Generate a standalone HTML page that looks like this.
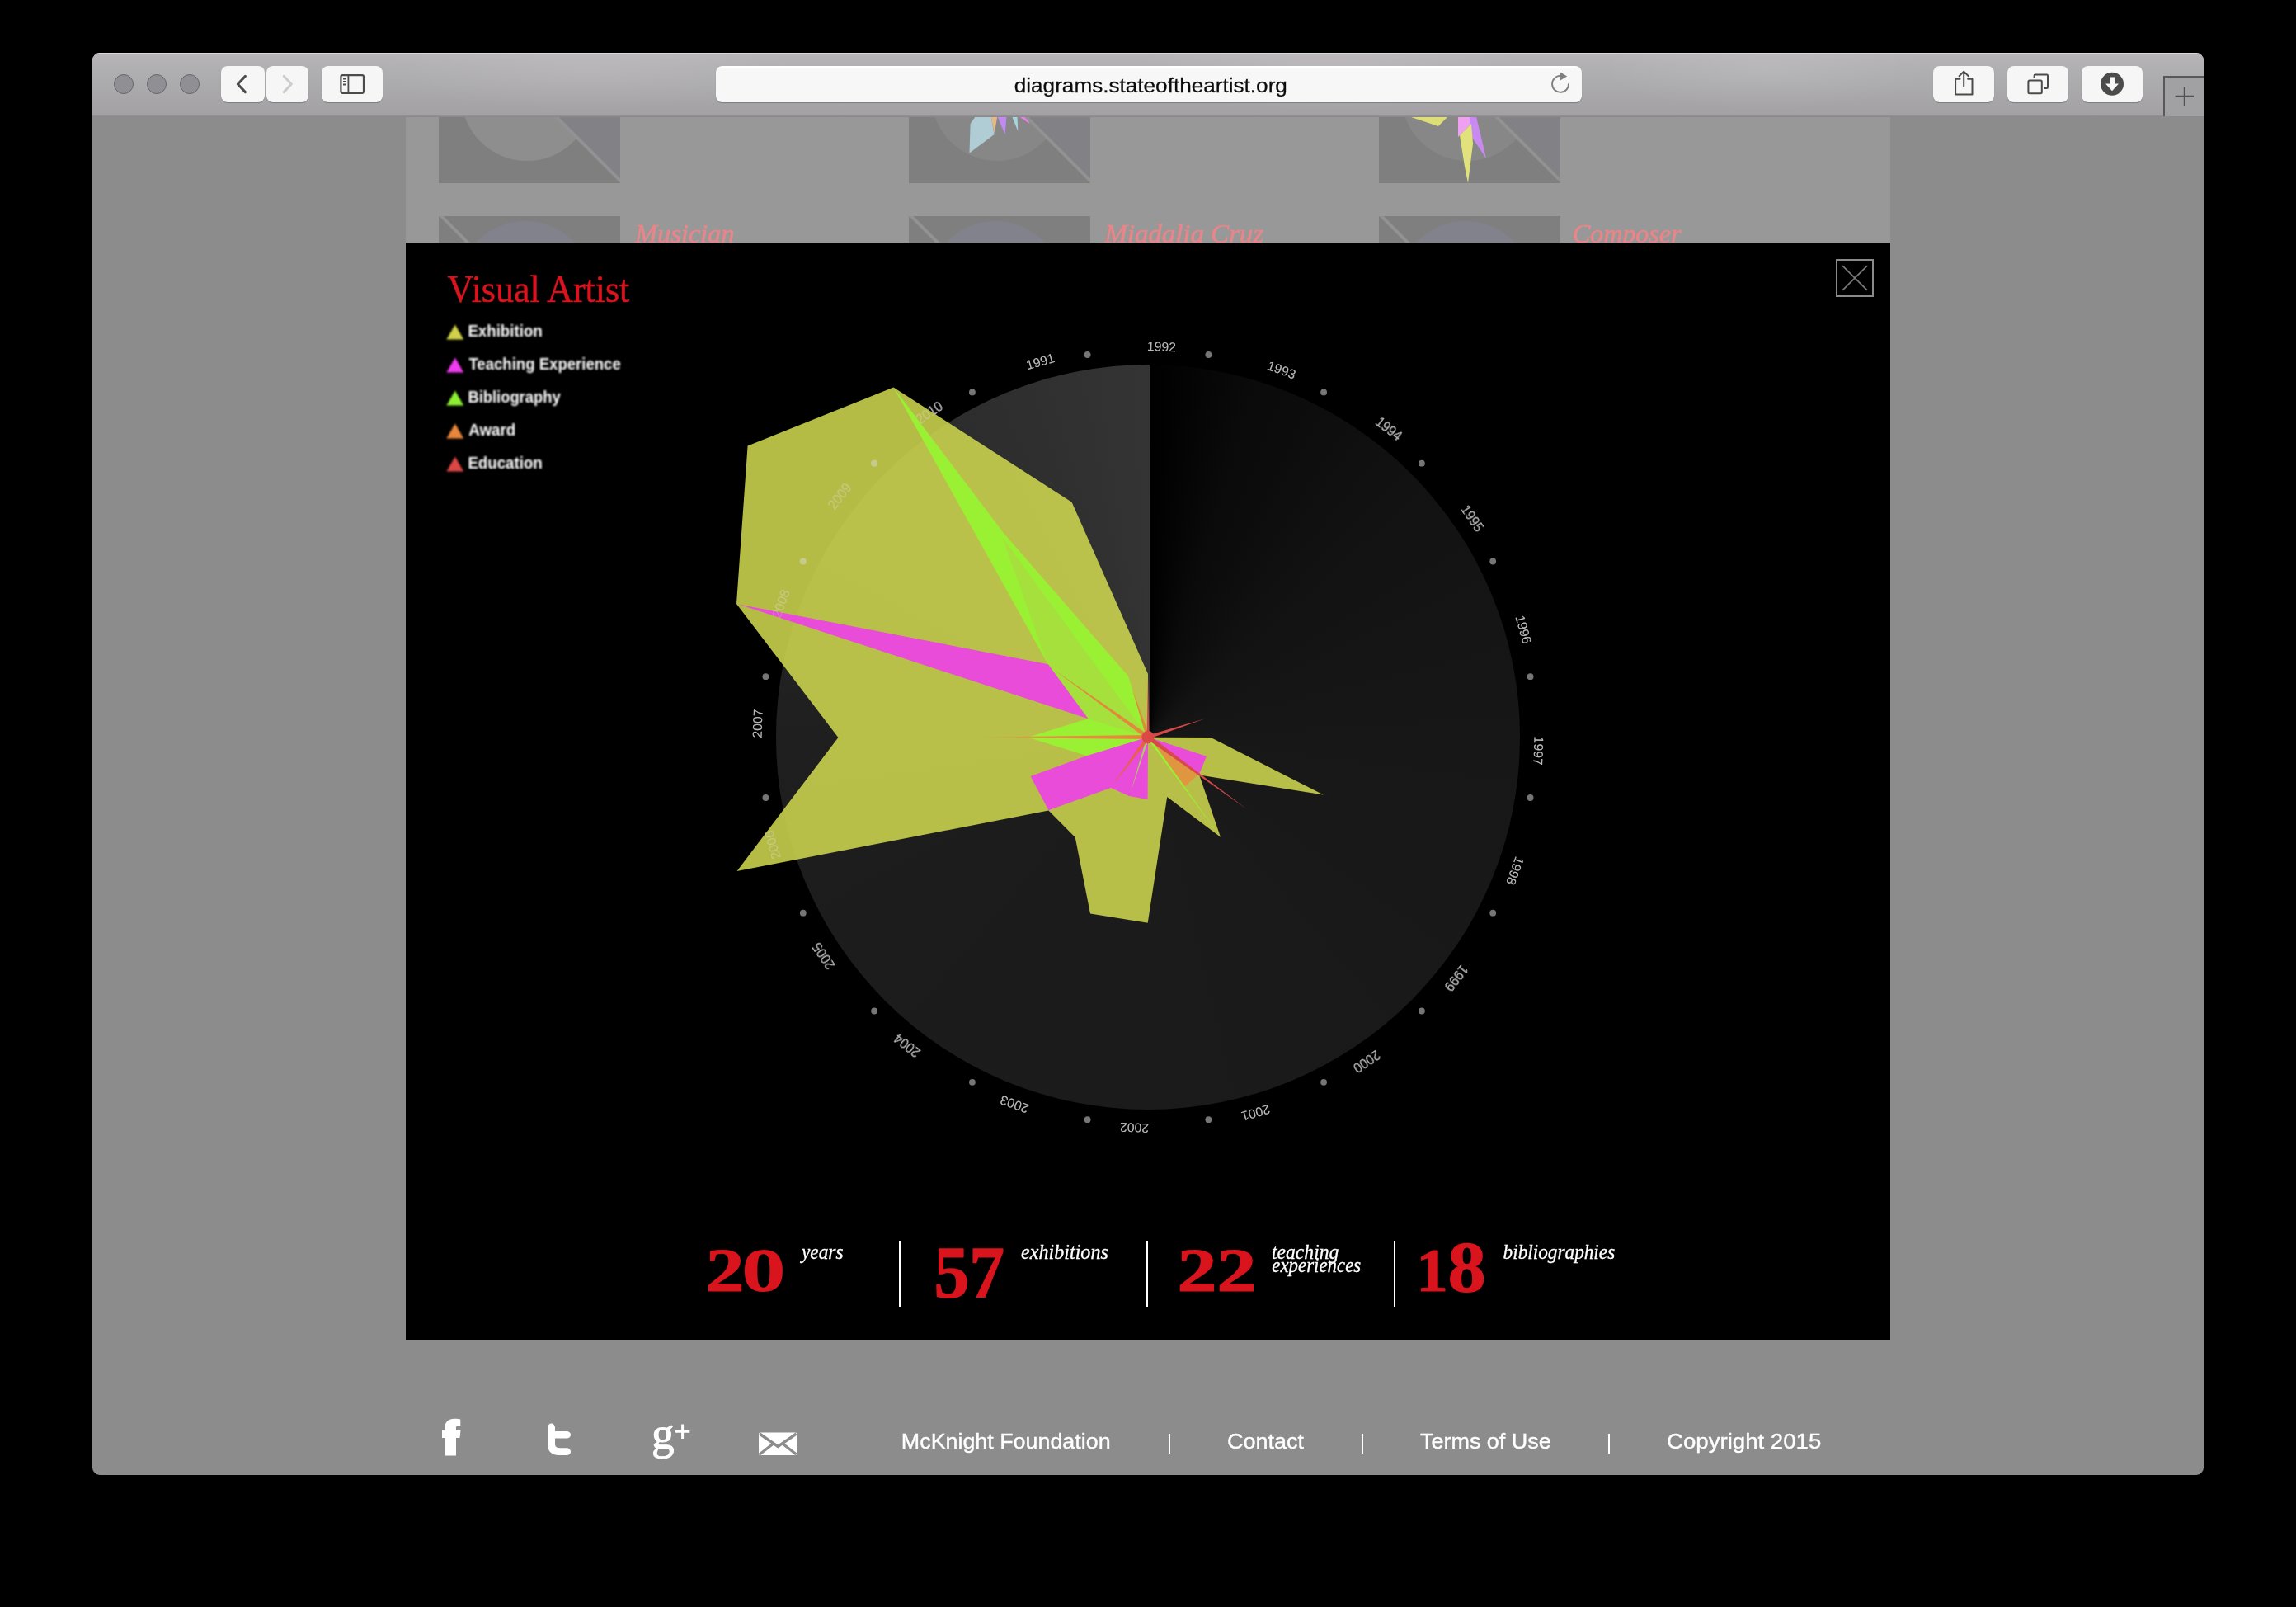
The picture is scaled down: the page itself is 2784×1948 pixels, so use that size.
<!DOCTYPE html>
<html><head><meta charset="utf-8"><title>diagrams.stateoftheartist.org</title>
<style>
*{margin:0;padding:0;box-sizing:border-box}
html,body{width:2784px;height:1948px;background:#000;overflow:hidden}
body{position:relative;font-family:"Liberation Sans",sans-serif}
.abs{position:absolute}
.win{position:absolute;left:112px;top:64px;width:2560px;height:1724px;background:#8c8c8c;border-radius:9px;overflow:hidden}
.tb{position:absolute;left:0;top:0;width:2560px;height:78px;background:radial-gradient(ellipse 260px 50px at 600px 20px,rgba(255,245,250,.10),transparent),radial-gradient(ellipse 240px 50px at 1500px 20px,rgba(255,235,240,.12),transparent),radial-gradient(ellipse 200px 50px at 2030px 20px,rgba(255,250,250,.10),transparent),linear-gradient(#b9b6b9 0,#b3b1b4 14%,#afaeb1 27%,#acabae 44%,#a3a1a4 96.5%,#8b898c 98.6%,#8b898c 100%);}
.tb:before{content:"";position:absolute;left:0;top:0;right:0;height:1.5px;background:#dededf;opacity:.9}
.tl{position:absolute;top:26px;width:24px;height:24px;border-radius:50%;background:#908f94;border:1px solid #68666b}
.btn{position:absolute;top:16px;height:44px;background:#f6f6f6;border-radius:8px;box-shadow:0 1px 1px rgba(0,0,0,.25)}
.url{position:absolute;left:756px;top:16px;width:1050px;height:44px;background:linear-gradient(#fff 0,#fff 4%,#f7f7f7 9%,#f7f7f7 100%);border-radius:8px;box-shadow:0 1px 1px rgba(0,0,0,.25)}
.url span{position:absolute;left:362px;top:7px;font-size:24.5px;line-height:30px;color:#0a0a0a;white-space:nowrap;letter-spacing:0px}
.newtab{position:absolute;left:2511px;top:28px;width:60px;height:49px;border:2px solid #58575a;border-right:none;border-bottom:none;background:#a1a0a3}
.col{position:absolute;left:380px;top:78px;width:1800px;height:152px;background:#989898;overflow:hidden}
.th{position:absolute;width:220px;height:220px;background:#7f7f7f;overflow:hidden}
.th i{position:absolute;border-radius:50%}
.th b{position:absolute;left:-50px;top:105px;width:320px;height:4px;background:#929292;transform:rotate(45deg)}
.th u{position:absolute;left:0;top:0;width:220px;height:220px;background:#818186;clip-path:polygon(3px 0,220px 0,220px 217px)}
.nm{position:absolute;top:192px;font-family:"Liberation Serif",serif;font-style:italic;font-size:32px;line-height:40px;color:#e8858a;white-space:nowrap}
.modal{position:absolute;left:492px;top:294px;width:1800px;height:1330px;background:#000}
.title{position:absolute;left:541px;top:322px;font-family:"Liberation Serif",serif;font-size:46px;line-height:56px;color:#d9141e;white-space:nowrap}
.lg{position:absolute;left:568px;font-size:19px;line-height:24px;font-weight:bold;color:#f4f4f4;white-space:nowrap;filter:blur(.5px)}
.tri{position:absolute;left:541px;width:0;height:0;border-left:10.5px solid transparent;border-right:10.5px solid transparent;border-bottom:18px solid #000;filter:blur(.5px)}
.disc{position:absolute;left:940.7px;top:442.3px;width:902.6px;height:902.6px;border-radius:50%;background:conic-gradient(from 0deg at calc(50% + 1.6px) 50%,#000 0deg,#0a0a0a 16deg,#121212 45deg,#171717 90deg,#191919 135deg,#1b1b1b 180deg,#1c1c1c 240deg,#1f1f1f 270deg,#262626 300deg,#2d2d2d 330deg,#343434 360deg)}
.num{position:absolute;font-family:"Liberation Serif",serif;font-weight:bold;color:#d9141c;white-space:nowrap;line-height:1;transform-origin:0 0}
.lab{position:absolute;font-family:"Liberation Serif",serif;font-style:italic;font-size:24px;line-height:16px;color:#fff;white-space:nowrap}
.sep{position:absolute;top:1504px;width:2px;height:80px;background:#fff}
.ft{position:absolute;top:1731px;font-size:25px;line-height:30px;color:#fff;white-space:nowrap}

</style></head>
<body>
<div class="win">
  <div class="col">
    <div class="th" style="left:40px;top:-140px"><i style="left:27px;top:33px;width:160px;height:160px;background:#8e8e8e"></i><u></u><b></b></div>
    <div class="th" style="left:610px;top:-140px"><i style="left:27px;top:33px;width:160px;height:160px;background:#878787"></i>
      <svg class="abs" style="left:0;top:0" width="220" height="220" viewBox="0 0 220 220"><polygon points="81,139 74.6,148 73.5,183.6 103.5,161 99.7,139" fill="#b0cdd6"/><polygon points="99.7,139 107.4,139 103.6,159.500" fill="#e6b88a"/><polygon points="107.2,139 118.5,139 116.6,161" fill="#c08af0"/><polygon points="125,139 131.5,139 132.3,157" fill="#a8d4e0"/><polygon points="133.4,139 142.8,139 146.5,148" fill="#e880f0"/></svg><u></u><b></b></div>
    <div class="th" style="left:1180px;top:-140px"><i style="left:27px;top:33px;width:160px;height:160px;background:#878787"></i>
      <svg class="abs" style="left:0;top:0" width="220" height="220" viewBox="0 0 220 220"><polygon points="36,139 84,139 72,151" fill="#dede78"/><polygon points="96,139 110,139 110,150 96,164" fill="#f0a0f0"/><polygon points="110,139 118,139 130,190 110,160" fill="#c88af0"/><polygon points="98,162 112,148 114,172 108,220 104,200" fill="#e2e27c"/></svg><u></u><b></b></div>
    <div class="th" style="left:40px;top:120px"><i style="left:23px;top:6px;width:164px;height:164px;background:#82828d"></i><b style="top:-5px;left:-160px"></b></div>
    <div class="th" style="left:610px;top:120px"><i style="left:23px;top:6px;width:164px;height:164px;background:#82828d"></i><b style="top:-5px;left:-160px"></b></div>
    <div class="th" style="left:1180px;top:120px"><i style="left:23px;top:6px;width:164px;height:164px;background:#82828d"></i><b style="top:-5px;left:-160px"></b></div>
    <svg class="abs" style="left:0;top:0" width="1800" height="152" viewBox="492 142 1800 152">
<text transform="matrix(0.9926 0 0 1 769.52 294.20)" font-family="Liberation Serif, serif" font-size="32.6" font-weight="normal" font-style="italic" fill="#e88589" stroke="#e88589" stroke-width=".5">Musician</text>
<text transform="matrix(1.0082 0 0 1 1338.93 294.20)" font-family="Liberation Serif, serif" font-size="32.6" font-weight="normal" font-style="italic" fill="#e88589" stroke="#e88589" stroke-width=".5">Miadalia Cruz</text>
<text transform="matrix(0.9834 0 0 1 1906.24 294.20)" font-family="Liberation Serif, serif" font-size="32.6" font-weight="normal" font-style="italic" fill="#e88589" stroke="#e88589" stroke-width=".5">Composer</text>
</svg>
  </div>
  <div class="tb">
    <div class="tl" style="left:26px"></div><div class="tl" style="left:66px"></div><div class="tl" style="left:106px"></div>
    <div class="btn" style="left:156px;width:53px"></div>
    <div class="btn" style="left:211px;width:51px"></div>
    <div class="btn" style="left:278px;width:74px"></div>
    <div class="url"></div>
    <div class="btn" style="left:2232px;width:74px"></div>
    <div class="btn" style="left:2322px;width:74px"></div>
    <div class="btn" style="left:2412px;width:74px"></div>
    <div class="newtab"></div>
  </div>
</div>
<div class="modal"></div>
<div class="disc"></div>
<svg class="abs" style="left:0;top:0" width="2784" height="1948" viewBox="0 0 2784 1948">
<defs><linearGradient id="lg" gradientUnits="userSpaceOnUse" x1="1392" y1="0" x2="1170" y2="0"><stop offset="0" stop-color="#e8843c"/><stop offset=".6" stop-color="#e0903c" stop-opacity=".9"/><stop offset="1" stop-color="#d8a040" stop-opacity="0"/></linearGradient></defs>
<circle cx="1465.4" cy="430.0" r="3.9" fill="#767676"/>
<circle cx="1605.1" cy="475.4" r="3.9" fill="#767676"/>
<circle cx="1723.9" cy="561.7" r="3.9" fill="#767676"/>
<circle cx="1810.2" cy="680.5" r="3.9" fill="#767676"/>
<circle cx="1855.6" cy="820.2" r="3.9" fill="#767676"/>
<circle cx="1855.6" cy="967.0" r="3.9" fill="#767676"/>
<circle cx="1810.2" cy="1106.7" r="3.9" fill="#767676"/>
<circle cx="1723.9" cy="1225.5" r="3.9" fill="#767676"/>
<circle cx="1605.1" cy="1311.8" r="3.9" fill="#767676"/>
<circle cx="1465.4" cy="1357.2" r="3.9" fill="#767676"/>
<circle cx="1318.6" cy="1357.2" r="3.9" fill="#767676"/>
<circle cx="1178.9" cy="1311.8" r="3.9" fill="#767676"/>
<circle cx="1060.1" cy="1225.5" r="3.9" fill="#767676"/>
<circle cx="973.8" cy="1106.7" r="3.9" fill="#767676"/>
<circle cx="928.4" cy="967.0" r="3.9" fill="#767676"/>
<circle cx="928.4" cy="820.2" r="3.9" fill="#767676"/>
<circle cx="973.8" cy="680.5" r="3.9" fill="#767676"/>
<circle cx="1060.1" cy="561.7" r="3.9" fill="#767676"/>
<circle cx="1178.9" cy="475.4" r="3.9" fill="#767676"/>
<circle cx="1318.6" cy="430.0" r="3.9" fill="#767676"/>
<g font-family="Liberation Sans, sans-serif" font-size="15.8" fill="#b6b6b6" fill-opacity="1" text-anchor="middle" style="filter:blur(.65px)">
<text transform="rotate(2.0 1392.0 893.6)" x="1392.0" y="425.4">1992</text>
<text transform="rotate(20.0 1392.0 893.6)" x="1392.0" y="425.4">1993</text>
<text transform="rotate(38.0 1392.0 893.6)" x="1392.0" y="425.4">1994</text>
<text transform="rotate(56.0 1392.0 893.6)" x="1392.0" y="425.4">1995</text>
<text transform="rotate(74.0 1392.0 893.6)" x="1392.0" y="425.4">1996</text>
<text transform="rotate(92.0 1392.0 893.6)" x="1392.0" y="425.4">1997</text>
<text transform="rotate(110.0 1392.0 893.6)" x="1392.0" y="425.4">1998</text>
<text transform="rotate(128.0 1392.0 893.6)" x="1392.0" y="425.4">1999</text>
<text transform="rotate(146.0 1392.0 893.6)" x="1392.0" y="425.4">2000</text>
<text transform="rotate(164.0 1392.0 893.6)" x="1392.0" y="425.4">2001</text>
<text transform="rotate(182.0 1392.0 893.6)" x="1392.0" y="425.4">2002</text>
<text transform="rotate(200.0 1392.0 893.6)" x="1392.0" y="425.4">2003</text>
<text transform="rotate(218.0 1392.0 893.6)" x="1392.0" y="425.4">2004</text>
<text transform="rotate(236.0 1392.0 893.6)" x="1392.0" y="425.4">2005</text>
<text transform="rotate(254.0 1392.0 893.6)" x="1392.0" y="425.4">2006</text>
<text transform="rotate(272.0 1392.0 893.6)" x="1392.0" y="425.4">2007</text>
<text transform="rotate(290.0 1392.0 893.6)" x="1392.0" y="425.4">2008</text>
<text transform="rotate(308.0 1392.0 893.6)" x="1392.0" y="425.4">2009</text>
<text transform="rotate(326.0 1392.0 893.6)" x="1392.0" y="425.4">2010</text>
<text transform="rotate(344.0 1392.0 893.6)" x="1392.0" y="425.4">1991</text>
</g>
<polygon points="1083.4,469.6 906.6,540.4 893.0,732.0 1016.4,893.9 893.6,1055.9 1271.4,982.6 1303.7,1015.0 1322.0,1107.5 1391.7,1118.8 1415.2,966.1 1480.0,1014.7 1454.2,939.4 1604.8,963.6 1468.2,893.9 1392.0,893.6 1392.0,817.0 1299.6,608.8" fill="#d0d850" fill-opacity=".87"/>
<polygon points="1083.8,470.2 1216.8,646.0 1368.0,819.5 1392.0,893.6 1318.0,916.2 1246.0,893.8 1319.2,871.3 1270.0,804.1" fill="#9af032"/>
<polygon points="1215.4,651.6 1392.0,893.6 1319.2,871.3 1270.0,804.1" fill="#a6e03c"/>
<polygon points="895.5,732.6 1271.0,805.2 1319.5,871.2" fill="#e84cd8"/>
<polygon points="1249.6,941.0 1271.4,982.2 1347.0,955.0 1369.0,965.0 1391.6,968.9 1392.0,893.6 1316.7,916.6" fill="#e84cd8"/>
<polygon points="1392.0,893.6 1463.0,916.8 1454.0,938.6" fill="#e84cd8"/>
<polygon points="1392.0,893.6 1452.5,939.2 1436.9,953.2" fill="#e09640"/>
<g font-family="Liberation Sans, sans-serif" font-size="15.8" fill="#b6b6b6" fill-opacity="0.4" text-anchor="middle" style="filter:blur(.65px)">
<text transform="rotate(2.0 1392.0 893.6)" x="1392.0" y="425.4">1992</text>
<text transform="rotate(20.0 1392.0 893.6)" x="1392.0" y="425.4">1993</text>
<text transform="rotate(38.0 1392.0 893.6)" x="1392.0" y="425.4">1994</text>
<text transform="rotate(56.0 1392.0 893.6)" x="1392.0" y="425.4">1995</text>
<text transform="rotate(74.0 1392.0 893.6)" x="1392.0" y="425.4">1996</text>
<text transform="rotate(92.0 1392.0 893.6)" x="1392.0" y="425.4">1997</text>
<text transform="rotate(110.0 1392.0 893.6)" x="1392.0" y="425.4">1998</text>
<text transform="rotate(128.0 1392.0 893.6)" x="1392.0" y="425.4">1999</text>
<text transform="rotate(146.0 1392.0 893.6)" x="1392.0" y="425.4">2000</text>
<text transform="rotate(164.0 1392.0 893.6)" x="1392.0" y="425.4">2001</text>
<text transform="rotate(182.0 1392.0 893.6)" x="1392.0" y="425.4">2002</text>
<text transform="rotate(200.0 1392.0 893.6)" x="1392.0" y="425.4">2003</text>
<text transform="rotate(218.0 1392.0 893.6)" x="1392.0" y="425.4">2004</text>
<text transform="rotate(236.0 1392.0 893.6)" x="1392.0" y="425.4">2005</text>
<text transform="rotate(254.0 1392.0 893.6)" x="1392.0" y="425.4">2006</text>
<text transform="rotate(272.0 1392.0 893.6)" x="1392.0" y="425.4">2007</text>
<text transform="rotate(290.0 1392.0 893.6)" x="1392.0" y="425.4">2008</text>
<text transform="rotate(308.0 1392.0 893.6)" x="1392.0" y="425.4">2009</text>
<text transform="rotate(326.0 1392.0 893.6)" x="1392.0" y="425.4">2010</text>
<text transform="rotate(344.0 1392.0 893.6)" x="1392.0" y="425.4">1991</text>
</g>
<circle cx="973.8" cy="680.5" r="4.1" fill="#c8ccc0" fill-opacity=".5"/>
<circle cx="1060.1" cy="561.7" r="4.1" fill="#c8ccc0" fill-opacity=".5"/>
<polygon points="1390.8,894.5 1478.7,1013.3 1393.2,892.7" fill="#9af032" fill-opacity="1.0"/>
<polygon points="1390.6,893.1 1370.7,961.0 1393.4,894.1" fill="#a8d060" fill-opacity="1.0"/>
<polygon points="1390.0,892.1 1348.9,952.3 1394.0,895.1" fill="#e8604c" fill-opacity="1.0"/>
<polygon points="1393.5,891.6 1276.7,811.0 1390.5,895.6" fill="#e08a3c" fill-opacity="1.0"/>
<polygon points="1393.9,893.0 1372.5,834.0 1390.1,894.2" fill="#e08a3c" fill-opacity="1.0"/>
<polygon points="1393.5,893.6 1392.0,819.0 1390.5,893.6" fill="#d84848" fill-opacity="1.0"/>
<polygon points="1392.0,891.1 1170.0,893.8 1392.0,896.1" fill="url(#lg)" fill-opacity="1.0"/>
<polygon points="1392.7,895.7 1461.0,871.3 1391.3,891.5" fill="#d84848" fill-opacity="1.0"/>
<polygon points="1390.4,895.8 1511.0,980.2 1393.6,891.4" fill="#d84848" fill-opacity="1.0"/>
<circle cx="1392.0" cy="893.6" r="7.6" fill="#d94a46"/>
</svg><svg class="abs" style="left:0;top:0" width="2784" height="1948" viewBox="0 0 2784 1948">
<g fill="none" stroke-linecap="round" stroke-linejoin="round">
<polyline points="297.4,92.4 288.3,102.0 297.4,111.600" stroke="#4b4b4b" stroke-width="3"/>
<polyline points="344.2,92.4 353.3,102.0 344.2,111.600" stroke="#cdcdcd" stroke-width="3"/>
<rect x="413.4" y="91.2" width="27.6" height="21.6" rx="2" stroke="#4b4b4b" stroke-width="2.2"/>
<path d="M422.4 91.2V112.8M416 95.5h4M416 99h4M416 102.5h4" stroke="#4b4b4b" stroke-width="1.8" stroke-linecap="butt"/>
<path d="M1902.05 101.3A10 10 0 1 1 1891.500 91.850" stroke="#7f7f7f" stroke-width="1.9" stroke-linecap="butt"/>
<path d="M1891 87L1900.2 92.45L1891 97.9z" fill="#7f7f7f" stroke="none"/>
<path d="M2376.5 95.8h-5.4v18.8h20.4v-18.8h-5.4M2381.2 104.6v-17.6M2375.6 92.2l5.6-5.6 5.6 5.6" stroke="#4b4b4b" stroke-width="2"/>
<rect x="2459.4" y="97.4" width="16.4" height="15.8" rx="1.5" stroke="#4b4b4b" stroke-width="2"/>
<path d="M2466.6 94v-2.2q0-1.2 1.2-1.2h14q1.2 0 1.2 1.2v14q0 1.2-1.2 1.2h-2.6" stroke="#4b4b4b" stroke-width="2"/>
<circle cx="2561" cy="101.8" r="14" fill="#4b4b4b" stroke="none"/>
<path d="M2558 93.6h6v8h5l-8 8.6-8-8.6h5z" fill="#f6f6f6" stroke="none"/>
<path d="M2637.6 116.8h22.4M2648.8 105.6v22.4" stroke="#505050" stroke-width="2" stroke-linecap="butt"/>
</g>
<text transform="matrix(1.0539 0 0 1 1229.75 112.20)" font-family="Liberation Sans, sans-serif" font-size="24.8" font-weight="normal" font-style="normal" fill="#0c0c0c" stroke="#0c0c0c" stroke-width=".25">diagrams.stateoftheartist.org</text>
<text transform="matrix(0.9514 0 0 1 542.56 365.90)" font-family="Liberation Serif, serif" font-size="46.2" font-weight="normal" font-style="normal" fill="#d9141e" stroke="#d9141e" stroke-width=".5">Visual Artist</text>
<g style="filter:blur(.8px)">
<polygon points="541.4,411.6 551.8,393.6 562.2,411.6" fill="#d2d24a"/>
<text transform="matrix(0.9641 0 0 1 567.38 407.80)" font-family="Liberation Sans, sans-serif" font-size="19.4" font-weight="bold" font-style="normal" fill="#ffffff" >Exhibition</text>
<polygon points="541.4,451.6 551.8,433.6 562.2,451.6" fill="#f03cf0"/>
<text transform="matrix(0.9574 0 0 1 568.41 447.80)" font-family="Liberation Sans, sans-serif" font-size="19.4" font-weight="bold" font-style="normal" fill="#ffffff" >Teaching Experience</text>
<polygon points="541.4,491.6 551.8,473.6 562.2,491.6" fill="#8cf032"/>
<text transform="matrix(0.9473 0 0 1 567.41 487.80)" font-family="Liberation Sans, sans-serif" font-size="19.4" font-weight="bold" font-style="normal" fill="#ffffff" >Bibliography</text>
<polygon points="541.4,531.6 551.8,513.6 562.2,531.6" fill="#e8863c"/>
<text transform="matrix(0.9714 0 0 1 568.13 527.80)" font-family="Liberation Sans, sans-serif" font-size="19.4" font-weight="bold" font-style="normal" fill="#ffffff" >Award</text>
<polygon points="541.4,571.6 551.8,553.6 562.2,571.6" fill="#dc4646"/>
<text transform="matrix(0.9631 0 0 1 567.39 567.80)" font-family="Liberation Sans, sans-serif" font-size="19.4" font-weight="bold" font-style="normal" fill="#ffffff" >Education</text>
</g>
<rect x="2227" y="315" width="44" height="44" fill="none" stroke="#8a8a8a" stroke-width="2"/>
<path d="M2234.6 322.6L2263.6 351.4M2263.6 322.6L2234.6 351.4" stroke="#7a7a7a" stroke-width="1.7" stroke-linecap="round" fill="none" style="filter:blur(.4px)"/>
<text transform="matrix(0.9333 0 0 0.7394 855.87 1564.80)" font-family="Liberation Serif, serif" font-size="100.0" font-weight="bold" font-style="normal" fill="#d9141c" stroke="#d9141c" stroke-width="1.6" stroke-linejoin="round">2</text>
<text transform="matrix(1.0857 0 0 1.0583 898.66 1565.14)" font-family="Liberation Serif, serif" font-size="100.0" font-weight="bold" font-style="normal" fill="#d9141c" >o</text>
<text transform="matrix(0.8535 0 0 0.8962 1132.59 1572.10)" font-family="Liberation Serif, serif" font-size="100.0" font-weight="bold" font-style="normal" fill="#d9141c" stroke="#d9141c" stroke-width="1.6" stroke-linejoin="round">57</text>
<text transform="matrix(0.9565 0 0 0.7394 1427.57 1564.80)" font-family="Liberation Serif, serif" font-size="100.0" font-weight="bold" font-style="normal" fill="#d9141c" stroke="#d9141c" stroke-width="1.6" stroke-linejoin="round">22</text>
<text transform="matrix(0.7730 0 0 0.7394 1717.22 1564.80)" font-family="Liberation Serif, serif" font-size="100.0" font-weight="bold" font-style="normal" fill="#d9141c" stroke="#d9141c" stroke-width="1.6" stroke-linejoin="round">1</text>
<text transform="matrix(0.9163 0 0 0.8652 1755.79 1564.73)" font-family="Liberation Serif, serif" font-size="100.0" font-weight="bold" font-style="normal" fill="#d9141c" stroke="#d9141c" stroke-width="1.6" stroke-linejoin="round">8</text>
<rect x="1090" y="1504" width="2" height="80" fill="#fff"/>
<rect x="1390" y="1504" width="2" height="80" fill="#fff"/>
<rect x="1690" y="1504" width="2" height="80" fill="#fff"/>
<text transform="matrix(0.9524 0 0 1 971.98 1526.00)" font-family="Liberation Serif, serif" font-size="24.5" font-weight="normal" font-style="italic" fill="#fff" stroke="#fff" stroke-width=".3">years</text>
<text transform="matrix(0.9841 0 0 1 1238.08 1526.00)" font-family="Liberation Serif, serif" font-size="24.5" font-weight="normal" font-style="italic" fill="#fff" stroke="#fff" stroke-width=".3">exhibitions</text>
<text transform="matrix(0.9665 0 0 1 1541.93 1526.00)" font-family="Liberation Serif, serif" font-size="24.5" font-weight="normal" font-style="italic" fill="#fff" stroke="#fff" stroke-width=".3">teaching</text>
<text transform="matrix(0.9337 0 0 1 1542.31 1542.00)" font-family="Liberation Serif, serif" font-size="24.5" font-weight="normal" font-style="italic" fill="#fff" stroke="#fff" stroke-width=".3">experiences</text>
<text transform="matrix(0.9493 0 0 1 1822.59 1526.00)" font-family="Liberation Serif, serif" font-size="24.5" font-weight="normal" font-style="italic" fill="#fff" stroke="#fff" stroke-width=".3">bibliographies</text>
<text transform="matrix(1.0578 0 0 1 1092.85 1756.40)" font-family="Liberation Sans, sans-serif" font-size="25.4" font-weight="normal" font-style="normal" fill="#fff" stroke="#fff" stroke-width=".35">McKnight Foundation</text>
<text transform="matrix(1.0615 0 0 1 1488.05 1756.40)" font-family="Liberation Sans, sans-serif" font-size="25.4" font-weight="normal" font-style="normal" fill="#fff" stroke="#fff" stroke-width=".35">Contact</text>
<text transform="matrix(1.0611 0 0 1 1722.06 1756.40)" font-family="Liberation Sans, sans-serif" font-size="25.4" font-weight="normal" font-style="normal" fill="#fff" stroke="#fff" stroke-width=".35">Terms of Use</text>
<text transform="matrix(1.0875 0 0 1 2021.02 1756.40)" font-family="Liberation Sans, sans-serif" font-size="25.4" font-weight="normal" font-style="normal" fill="#fff" stroke="#fff" stroke-width=".35">Copyright 2015</text>
<rect x="1417" y="1738" width="2" height="24" fill="#fff"/>
<rect x="1651" y="1738" width="2" height="24" fill="#fff"/>
<rect x="1950" y="1738" width="2" height="24" fill="#fff"/>
<g fill="#fff" style="filter:blur(.6px)">
<path d="M539.5 1764.4V1743H536V1733.7H539.5V1730.5C539.5 1723.2 544 1719.7 551 1719.7C554 1719.7 556.5 1720 558.3 1720.4V1728.4H555.2C553.600 1728.4 553 1729.2 553 1730.8V1733.7H558.5L557.5 1743H553V1764.4Z"/>
<path d="M664 1730.500c0-3 2-5 4.500-5s4.500 2 4.500 5v4.500h14c3 0 5 1.800 5 4.300s-2 4.300-5 4.300h-14v6.500c0 3.500 2 5.200 5.500 5.200h8.500c3 0 5 1.900 5 4.400s-2 4.300-5 4.300h-9.500c-8.500 0-13.500-5-13.500-13z"/>
</g>
<text transform="matrix(1.0217 0 0 1 790.12 1755.70)" font-family="Liberation Serif, serif" font-size="54" font-weight="normal" font-style="normal" fill="#fff" stroke="#fff" stroke-width="1" style="filter:blur(.6px)">g</text>
<path d="M827.600 1726.500v17.400M818.900 1735.200h17.400" stroke="#fff" stroke-width="3" fill="none" style="filter:blur(.5px)"/>
<g style="filter:blur(.5px)"><rect x="920" y="1736.500" width="46.500" height="27.500" rx="2" fill="#fff"/><path d="M921 1738l22.300 15.500 22.300-15.500M921 1763l16-12.500M965.600 1763l-16-12.500" stroke="#8c8c8c" stroke-width="3.400" fill="none"/></g>
</svg>

</body></html>
